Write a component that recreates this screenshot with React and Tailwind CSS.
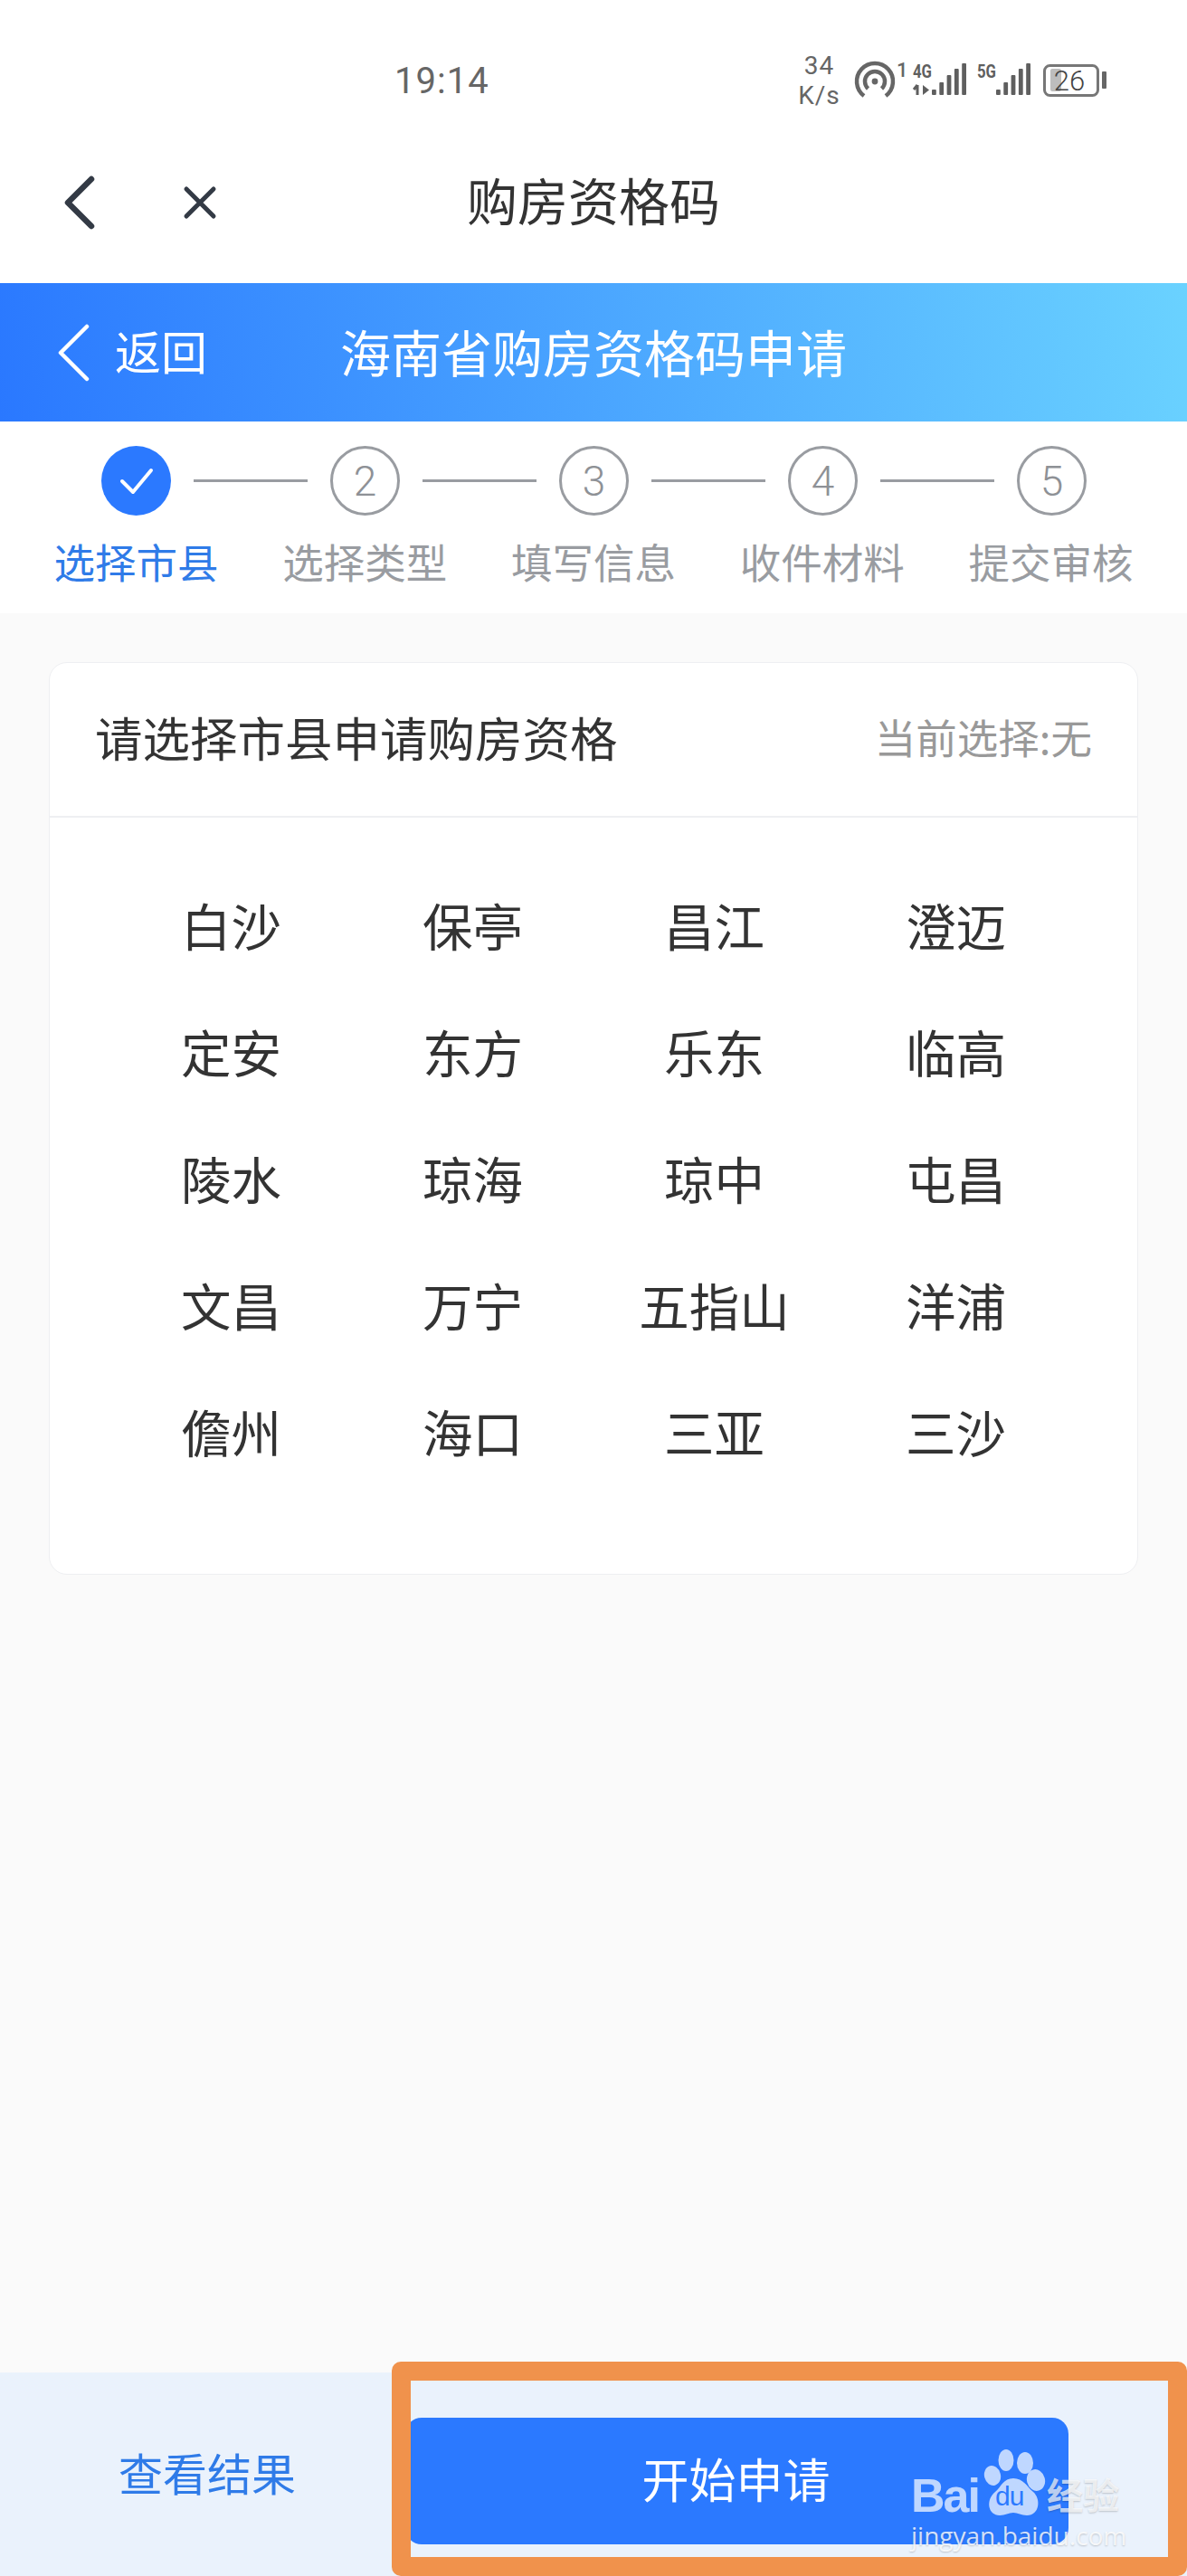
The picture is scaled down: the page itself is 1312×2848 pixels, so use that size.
const STEPS = ["选择市县", "选择类型", "填写信息", "收件材料", "提交审核"];

const CITIES = [
  "白沙", "保亭", "昌江", "澄迈",
  "定安", "东方", "乐东", "临高",
  "陵水", "琼海", "琼中", "屯昌",
  "文昌", "万宁", "五指山", "洋浦",
  "儋州", "海口", "三亚", "三沙",
];

const SIGNAL_TOPS = [100, 92, 84, 77, 71];

const SignalBars = ({ x }) => (
  <>
    {SIGNAL_TOPS.map((top, i) => (
      <rect key={i} x={x + i * 8.3} y={top} width="4.8" height={106 - top} rx="1" fill="#5f5f5f" />
    ))}
  </>
);

const StatusIcons = () => (
  <svg width="290" height="60" viewBox="940 60 290 60" className="shrink-0">
    {/* hotspot */}
    <g transform="translate(967 91)" fill="none" stroke="#666" strokeWidth="4.5">
      <path d="M-12 16A20 20 0 1 1 12 16" />
      <path d="M-7.5 8A11 11 0 1 1 7.5 8" />
      <circle r="3.4" fill="#666" stroke="none" />
    </g>
    <text x="991" y="86" fontSize="22" fontFamily="Roboto" fontWeight="500" fill="#666">1</text>

    {/* 4G */}
    <text x="1009" y="87" fontSize="21" fontFamily="Roboto" fontWeight="700" fill="#5f5f5f" textLength="21" lengthAdjust="spacingAndGlyphs">4G</text>
    <path d="M1014 95V106M1010 100L1014 95" stroke="#5f5f5f" strokeWidth="3" fill="none" />
    <path d="M1020 95L1027 100.5L1020 106Z" fill="#5f5f5f" />
    <SignalBars x={1030} />

    {/* 5G */}
    <text x="1080" y="87" fontSize="21" fontFamily="Roboto" fontWeight="700" fill="#5f5f5f" textLength="21" lengthAdjust="spacingAndGlyphs">5G</text>
    <SignalBars x={1101} />

    {/* battery */}
    <rect x="1154.5" y="73.5" width="59" height="33" rx="6" fill="none" stroke="#777" strokeWidth="3" />
    <rect x="1161" y="77" width="12" height="25" rx="2" fill="#BDBDBD" />
    <rect x="1218" y="80" width="5" height="19" rx="1" fill="#666" />
    <text x="1182" y="101" fontSize="31" fontFamily="Roboto" fontWeight="300" fill="#444" textAnchor="middle">26</text>
  </svg>
);

const StatusBar = () => (
  <div className="flex h-[134px] items-center pt-[44px] text-[#666]">
    <div className="ml-[436px] mt-[2px] w-[448px] font-['Roboto',sans-serif] text-[40px] leading-none tracking-[1px]">19:14</div>
    <div className="flex w-[43px] flex-col items-center font-['Roboto',sans-serif] text-[28px] leading-[33px] tracking-[1px]">
      <span>34</span>
      <span>K/s</span>
    </div>
    <div className="ml-[13px]">
      <StatusIcons />
    </div>
  </div>
);

const NavBar = () => (
  <div className="grid h-[179px] grid-cols-[1fr_auto_1fr] items-center">
    <div className="flex items-center pl-[70px]">
      <svg width="36" height="60" viewBox="0 0 36 60" fill="none" stroke="#333a45" strokeWidth="6.5" strokeLinecap="round" strokeLinejoin="round">
        <path d="M31 4L5 30L31 56" />
      </svg>
      <svg className="ml-[96px]" width="38" height="38" viewBox="0 0 38 38" fill="none" stroke="#333a45" strokeWidth="5" strokeLinecap="round">
        <path d="M4 4L34 34M34 4L4 34" />
      </svg>
    </div>
    <div className="mb-[7px] text-[56px] leading-none text-[#333]">购房资格码</div>
    <div />
  </div>
);

const Banner = () => (
  <div className="grid h-[153px] grid-cols-[1fr_auto_1fr] items-center bg-[linear-gradient(80deg,#2a78ff,#6ad2ff)] text-white">
    <div className="flex items-center pl-[63px]">
      <svg width="36" height="64" viewBox="0 0 36 64" fill="none" stroke="#fff" strokeWidth="4.5" strokeLinecap="round" strokeLinejoin="round">
        <path d="M33 3L4 32L33 61" />
      </svg>
      <span className="mb-[4px] ml-[28px] text-[51px] leading-none">返回</span>
    </div>
    <div className="mb-[4px] text-[56px] leading-none">海南省购房资格码申请</div>
    <div />
  </div>
);

const Stepper = () => (
  <div className="h-[212px] bg-white px-[24px] pt-[27px]">
    <div className="flex items-center gap-[25px] pl-[88px]">
      {STEPS.map((_, i) => (
        <div key={i} className="flex items-center gap-[25px]">
          {i === 0 ? (
            <div className="flex h-[77px] w-[77px] items-center justify-center rounded-full bg-[#2b79ff]">
              <svg width="38" height="30" viewBox="0 0 38 30" fill="none" stroke="#fff" strokeWidth="4" strokeLinecap="round" strokeLinejoin="round">
                <path d="M3 15L15 27L35 3" />
              </svg>
            </div>
          ) : (
            <div className="flex h-[77px] w-[77px] items-center justify-center rounded-full border-[3px] border-[#999ca1] font-['Roboto',sans-serif] text-[46px] font-light leading-none text-[#8e9196]">
              {i + 1}
            </div>
          )}
          {i < STEPS.length - 1 && <div className="h-[3px] w-[126px] bg-[#999ca1]" />}
        </div>
      ))}
    </div>
    <div className="mt-[19px] grid grid-cols-5">
      {STEPS.map((label, i) => (
        <div
          key={label}
          className={i === 0 ? "text-center text-[45.5px] leading-[62px] text-[#2f7be8]" : "text-center text-[45.5px] leading-[62px] text-[#999ca1]"}
        >
          {label}
        </div>
      ))}
    </div>
  </div>
);

const CityCard = () => (
  <div className="mx-[54px] mt-[54px] h-[1009px] rounded-[20px] border border-[#eeeff2] bg-white">
    <div className="flex h-[171px] items-center justify-between border-b-2 border-[#eeeff2] pb-[6px] pl-[50px] pr-[50px]">
      <span className="text-[52.5px] leading-none text-[#333]">请选择市县申请购房资格</span>
      <span className="text-[45.5px] leading-none text-[#999]">当前选择:无</span>
    </div>
    <div className="grid grid-cols-4 px-[67px] pt-[49px]">
      {CITIES.map((city) => (
        <div key={city} className="flex h-[140px] items-center justify-center text-[55.5px] text-[#333]">
          {city}
        </div>
      ))}
    </div>
  </div>
);

// watermark sits on top of the bottom bar
const Watermark = () => (
  <div className="pointer-events-none absolute left-[1007px] top-[84px] h-[112px] w-[236px]">
    <div className="absolute left-0 top-[26px] font-['Liberation_Sans',sans-serif] text-[52px] font-bold leading-none tracking-[-2px] text-white/70">Bai</div>
    <svg className="absolute left-[80px] top-0" width="70" height="76" viewBox="0 0 70 76">
      <g fill="#fff" fillOpacity="0.7">
        <ellipse cx="25" cy="13" rx="8.5" ry="12" />
        <ellipse cx="46" cy="16" rx="9" ry="12" />
        <ellipse cx="10" cy="30" rx="9" ry="11" transform="rotate(-15 10 30)" />
        <ellipse cx="58" cy="35" rx="10" ry="12" transform="rotate(-15 58 35)" />
        <path d="M33 33C44 33 48 42 55 48C64 56 62 74 48 74C42 74 38 71 33 71C28 71 24 74 18 74C5 74 2 57 13 48C20 42 22 33 33 33Z" />
      </g>
    </svg>
    <div className="absolute left-[93px] top-[38px] font-['Liberation_Sans',sans-serif] text-[30px] leading-none tracking-[-1px] text-[#2b79ff]">du</div>
    <div className="absolute left-[150px] top-[30px] text-[40px] font-bold leading-none text-white/70 [text-shadow:0_1px_2px_rgba(0,0,0,0.2)]">经验</div>
    <div className="absolute left-0 top-[82px] font-['Open_Sans',sans-serif] text-[28px] leading-none text-white/80 [text-shadow:0_1px_2px_rgba(0,0,0,0.2)]">jingyan.baidu.com</div>
  </div>
);

const BottomBar = () => (
  <div className="relative flex h-[225px] shrink-0 bg-[#eaf2fc]">
    <div className="flex h-full w-[448px] items-center justify-center pb-[6px] pl-[10px] text-[49px] leading-none text-[#2f7be8]">查看结果</div>
    <div className="mt-[50px] flex h-[140px] w-[733px] items-center justify-center rounded-[18px] bg-[#2b79ff] pb-[6px] pr-[2px] text-[52px] leading-none text-white">开始申请</div>
    {/* highlight frame drawn over the screenshot */}
    <div className="absolute bottom-0 left-[433px] right-0 top-[-12px] rounded-[10px] border-[21px] border-[#f0924c]" />
    <Watermark />
  </div>
);

const App = () => {
  return (
    <div className="flex min-h-[2848px] w-[1312px] flex-col overflow-hidden bg-[#fafafa] font-['Noto_Sans_CJK_SC','Noto_Sans',sans-serif]">
      <div className="bg-white">
        <StatusBar />
        <NavBar />
      </div>
      <Banner />
      <Stepper />
      <div className="flex-1">
        <CityCard />
      </div>
      <BottomBar />
    </div>
  );
};

export default App;
